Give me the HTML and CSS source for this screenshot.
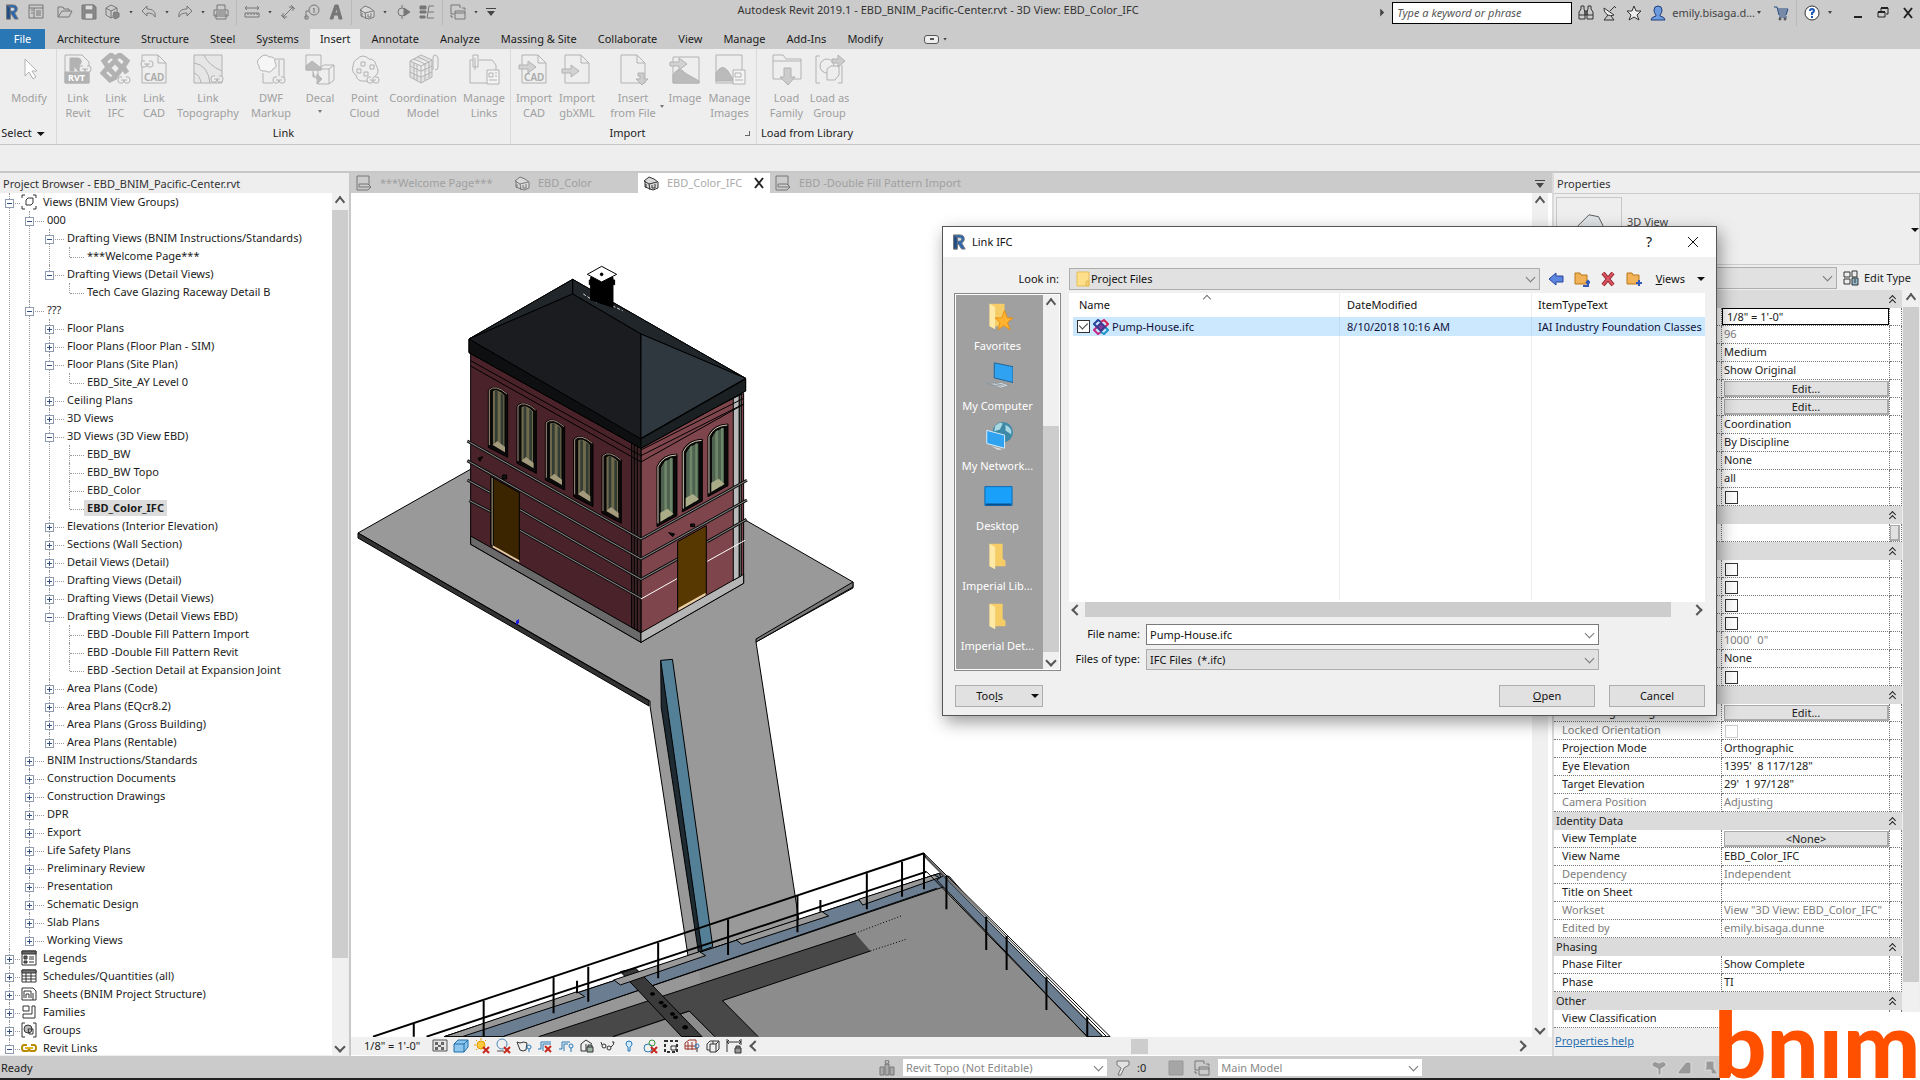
FILE: index.html
```
<!DOCTYPE html>
<html lang="en">
<head>
<meta charset="utf-8">
<title>Autodesk Revit 2019.1 - EBD_BNIM_Pacific-Center.rvt</title>
<link rel="stylesheet" href="styles.css">
</head>
<body>

<svg class="sprite" aria-hidden="true">
  <!-- 16px icons -->
  <symbol id="i-r" viewBox="0 0 16 18"><path d="M2 1h7q5 0 5 5 0 3-3 4l4 7h-4L7 11H6v6H2z" fill="#2b67b0"/><path d="M6 4h3q2 0 2 2t-2 2H6z" fill="#cfe0f2"/><path d="M2 1l4 3v13H2z" fill="#1d4a86"/></symbol>
  <symbol id="i-props" viewBox="0 0 16 16"><path d="M1 1h14v13H1zM1 4h14M6 4v10M3 6h2M3 9h2M8 7h5M8 9h5M8 11h5" /></symbol>
  <symbol id="i-open" viewBox="0 0 16 16"><path d="M1 13V3h5l1 2h5v2M1 13l4-6h10l-3 6z"/></symbol>
  <symbol id="i-save" viewBox="0 0 16 16"><path d="M1 1h12l2 2v12H1z" fill="#8a8a8a"/><path d="M4 1h8v5H4zM4 9h8v6H4z" fill="#ddd"/></symbol>
  <symbol id="i-sync" viewBox="0 0 16 16"><path d="M1 4l5-3 6 3v7l-6 3-5-3zM1 4l5 3 6-3M6 7v7"/><path d="M9 8l5 1v4l-4 2-2-3z" fill="#888"/></symbol>
  <symbol id="i-undo" viewBox="0 0 16 16"><path d="M1 7l5-5v3c6 0 9 3 8 8-1-3-4-4-8-4v3z"/></symbol>
  <symbol id="i-redo" viewBox="0 0 16 16"><path d="M15 7l-5-5v3c-6 0-9 3-8 8 1-3 4-4 8-4v3z"/></symbol>
  <symbol id="i-print" viewBox="0 0 16 16"><path d="M4 6V1h8v5M1 6h14v6H1z"/><path d="M3 10h10v5H3zM3 8h10"/></symbol>
  <symbol id="i-measure" viewBox="0 0 16 16"><path d="M1 4h14M3 2L1 4l2 2M13 2l2 2-2 2M1 9h14v4H1zM4 9v2M7 9v2M10 9v2M13 9v2"/></symbol>
  <symbol id="i-dim" viewBox="0 0 16 16"><path d="M3 13L13 3M9 3h4v4M3 9v4h4M11 1l4 4M1 11l4 4"/></symbol>
  <symbol id="i-tag" viewBox="0 0 16 16"><circle cx="10" cy="6" r="5"/><path d="M9 5l1-1v5M5 7H2v7M1 12h3v3H1z"/></symbol>
  <symbol id="i-a" viewBox="0 0 16 16"><path d="M2 15L7 1h3l4 14h-3l-1-4H6l-1 4zM7 9h3L8 4z" fill="#777"/></symbol>
  <symbol id="i-house" viewBox="0 0 16 16"><path d="M1 6l5-4 5 2 4 3v6l-5 2-8-3V6z" fill="#d9d9d9"/><path d="M1 6l5 3 1 6M6 9l8-2M3 9v4M9 10v3h3v-4"/></symbol>
  <symbol id="i-section" viewBox="0 0 16 16"><circle cx="7" cy="8" r="4"/><path d="M7 1v3M7 12v3M9 4l6 4-6 4z" fill="#777"/></symbol>
  <symbol id="i-thin" viewBox="0 0 16 16"><path d="M1 2h6v3H1zM1 7h6v2H1zM1 12h5v2H1z" fill="#777"/><path d="M10 2h5M9 8h6M8 14h7M10 2L8 14"/></symbol>
  <symbol id="i-switch" viewBox="0 0 16 16"><path d="M1 4V1h9v3M1 4v6h3M5 7h10v8H5zM5 9h10M12 4h3v2M3 13H1v-2"/></symbol>
  <symbol id="i-cust" viewBox="0 0 10 10"><path d="M0 1h10v1H0zM1 4h8L5 9z" fill="#444" stroke="none"/></symbol>
  <symbol id="i-binoc" viewBox="0 0 16 16"><path d="M3 1h3v3l1 3v7H1V7l2-3zM10 1h3v3l2 3v7H9V7l1-3zM7 6h2v4H7zM1 10h6M9 10h6"/></symbol>
  <symbol id="i-dish" viewBox="0 0 16 16"><path d="M2 3c0 6 5 9 10 7L2 3z" fill="#eee"/><path d="M8 6l4-4M6 10l-4 5h10l-3-4M12 1l2 2"/></symbol>
  <symbol id="i-star" viewBox="0 0 16 16"><path d="M8 1l2 5h5l-4 4 2 5-5-3-5 3 2-5-4-4h5z" fill="#eee"/></symbol>
  <symbol id="i-user" viewBox="0 0 16 16"><path d="M8 1q4 0 4 4 0 3-2 5v1q5 1 5 4H1q0-3 5-4v-1Q4 8 4 5q0-4 4-4z" fill="#6d9be0" stroke="#1f3e7a"/></symbol>
  <symbol id="i-cart" viewBox="0 0 16 16"><path d="M1 2h3l2 8h7l2-6H5M6 12h8M5 6h9M6 8h8" stroke="#234a86"/><circle cx="7" cy="14" r="1"/><circle cx="12" cy="14" r="1"/></symbol>
  <symbol id="i-help" viewBox="0 0 16 16"><circle cx="8" cy="8" r="7" fill="#fff" stroke="#333"/><path d="M6 6q0-2 2-2t2 2q0 1-2 2v2M8 11v2" stroke="#1a56b4" stroke-width="2"/></symbol>
  <symbol id="i-min" viewBox="0 0 12 12"><path d="M2 9h8v2H2z" fill="#222" stroke="none"/></symbol>
  <symbol id="i-restore" viewBox="0 0 12 12"><path d="M4 4V1h7v6H9M1 5h7v5H1z" stroke="#222"/><path d="M4 1h7M1 5h7" stroke="#222" stroke-width="2"/></symbol>
  <symbol id="i-close" viewBox="0 0 12 12"><path d="M2 1l8 10M10 1L2 11" stroke="#222" stroke-width="2"/></symbol>
  <symbol id="i-x" viewBox="0 0 12 12"><path d="M1 1l10 10M11 1L1 11" stroke="#111"/></symbol>
  <symbol id="i-sheet" viewBox="0 0 16 16"><path d="M1 12V1h12v9M1 12v3h11l3-3-3-3H3v3h12"/></symbol>
  <symbol id="i-views" viewBox="0 0 16 16"><path d="M4 1H1v3M12 1h3v3M4 15H1v-3M12 15h3v-3M5 6l2-2h5v5l-2 2H5z"/></symbol>
  <symbol id="i-legend" viewBox="0 0 16 16"><path d="M1 1h14v14H1z"/><path d="M1 1h14v3H1zM3 6h3v3H3zM3 11h3v2H3z" fill="#666"/><path d="M8 7h5M8 9h5M8 12h5"/></symbol>
  <symbol id="i-sched" viewBox="0 0 16 16"><path d="M1 2h14v12H1zM1 8h14M1 11h14M5 5v9M10 5v9"/><path d="M1 2h14v3H1z" fill="#777"/></symbol>
  <symbol id="i-sheets" viewBox="0 0 16 16"><path d="M1 2h11l3 3v9H1zM3 12V5h7v7M5 12V8h3v4M12 7v7"/></symbol>
  <symbol id="i-fam" viewBox="0 0 16 16"><path d="M2 2h6v5H2zM11 2h3v12H2v-4h9z"/></symbol>
  <symbol id="i-group" viewBox="0 0 16 16"><path d="M4 1H1v14h3M12 1h3v14h-3"/><circle cx="7" cy="7" r="4" fill="#bbb"/><path d="M7 7h5v5H8z"/></symbol>
  <symbol id="i-link" viewBox="0 0 16 16"><path d="M6 5H3q-2 0-2 3t2 3h3q2 0 2-3M10 5h3q2 0 2 3t-2 3h-3q-2 0-2-3M4 8h8" stroke="#b98a00" stroke-width="2"/><path d="M4 8h8" stroke="#ffd84a"/></symbol>
  <symbol id="i-type" viewBox="0 0 16 16"><path d="M1 2h6v5H1zM9 1h5v6H9zM1 9h6v5H1z"/><path d="M9 8h6v7H9z" fill="#8fb8cc"/><path d="M11 10h2M11 12h2"/></symbol>

  <!-- view control bar -->
  <symbol id="v-detail" viewBox="0 0 16 16"><path d="M1 2h14v11H1z" fill="#e4e4e4" stroke="#555"/><path d="M3 4h3v3H3zM9 4h3v3H9zM6 7h3v2H6zM3 9h3v3H3zM9 9h3v3H9z" fill="#666" stroke="none"/></symbol>
  <symbol id="v-cube" viewBox="0 0 16 16"><path d="M1 6l4-4h10v7l-4 5H1zM1 6h10v8M11 6l4-4" fill="#8cc6ee" stroke="#1f6fa8"/></symbol>
  <symbol id="v-sun" viewBox="0 0 16 16"><circle cx="7" cy="7" r="4" fill="#ffc93c" stroke="#e09a00"/><path d="M7 0v2M0 7h2M2 2l1 1M12 2l-1 1M2 12l1-1" stroke="#e09a00"/><path d="M9 9l6 6M15 9l-6 6" stroke="#c5281c" stroke-width="2"/></symbol>
  <symbol id="v-shadow" viewBox="0 0 16 16"><circle cx="7" cy="6" r="5" stroke="#4e89b8"/><path d="M2 13h7" stroke="#555"/><path d="M9 9l6 6M15 9l-6 6" stroke="#c5281c" stroke-width="2"/></symbol>
  <symbol id="v-pot" viewBox="0 0 16 16"><path d="M1 4l3 1q4-2 7 0l-1 7q-3 2-6 0z"/><circle cx="13" cy="9" r="2" stroke="#2778b5"/><path d="M13 11v3" stroke="#2778b5"/></symbol>
  <symbol id="v-crop" viewBox="0 0 16 16"><path d="M1 11h3V4h10M6 13V6h8" stroke="#2778b5"/><path d="M8 8l6 6M14 8l-6 6" stroke="#c5281c" stroke-width="2"/></symbol>
  <symbol id="v-crop2" viewBox="0 0 16 16"><path d="M1 11h3V4h8M6 13V6h4" stroke="#2778b5"/><circle cx="13" cy="8" r="2" stroke="#2778b5"/><path d="M13 10v4" stroke="#2778b5"/></symbol>
  <symbol id="v-lock" viewBox="0 0 16 16"><path d="M2 6l5-4 6 4M2 6v7h5M7 6v7"/><path d="M8 9h6v5H8zM9 9V7h4v2" fill="#9fb6a4"/></symbol>
  <symbol id="v-glass" viewBox="0 0 16 16"><circle cx="4" cy="8" r="2"/><circle cx="9" cy="10" r="2"/><path d="M2 7L1 4M11 9q3-2 3-5h-2"/></symbol>
  <symbol id="v-bulb" viewBox="0 0 16 16"><path d="M8 3q3 0 3 3 0 2-2 3v4H7V9Q5 8 5 6q0-3 3-3z" fill="#cfeaff" stroke="#2778b5"/></symbol>
  <symbol id="v-analytic" viewBox="0 0 16 16"><circle cx="6" cy="10" r="4" stroke="#2778b5"/><circle cx="10" cy="5" r="3" stroke="#3a9440"/><path d="M9 9l6 6M15 9l-6 6" stroke="#c5281c" stroke-width="2"/></symbol>
  <symbol id="v-region" viewBox="0 0 16 16"><path d="M2 3h12v11H2z" stroke-width="2" stroke-dasharray="3 2"/><path d="M8 8h5v4H8z"/></symbol>
  <symbol id="v-grid" viewBox="0 0 16 16"><path d="M1 5l4-3h7v9H1zM1 8h10M4 4v8M8 4v8" stroke="#9b3328"/><circle cx="13" cy="8" r="2" stroke="#2778b5"/><path d="M13 10v4"/></symbol>
  <symbol id="v-boxes" viewBox="0 0 16 16"><path d="M2 6l3-3h9v8l-3 3H5V6h6v8M11 6l3-3M2 6v6h3M8 3v3"/></symbol>
  <symbol id="v-constr" viewBox="0 0 16 16"><path d="M1 1v13M15 1v6M1 4h14M3 2L1 4l2 2M13 2l2 2-2 2"/><path d="M9 10h6v5H9zM10 10V8h4v2" fill="#999"/></symbol>
  <symbol id="s-people" viewBox="0 0 16 16"><path d="M1 7h4v8H1zM6 4h4v11H6zM11 7h4v8h-4z" fill="#aaa"/><circle cx="8" cy="2" r="2" fill="#bbb"/></symbol>
  <symbol id="s-filter" viewBox="0 0 16 16"><path d="M2 1h12v4l-5 3-3 7H3l3-7-4-3z" fill="#e2e2e2"/></symbol>
  <symbol id="s-blk" viewBox="0 0 16 16"><path d="M1 1h14v14H1z" fill="#a6a6a6" stroke="#999"/></symbol>
  <symbol id="s-fun" viewBox="0 0 16 16"><path d="M1 3q3-3 7 0 4-3 7 0v3l-5 3v6H7V9L1 6z" fill="#999" stroke="#ddd"/></symbol>
  <symbol id="s-wedge" viewBox="0 0 16 16"><path d="M1 12L9 2h5v12H1z" fill="#999" stroke="#ddd"/></symbol>
  <symbol id="s-pin" viewBox="0 0 16 16"><path d="M3 1h8v7l4 6H8v-4H1l2-2z" fill="#999" stroke="#ddd"/></symbol>

  <!-- dialog icons -->
  <symbol id="d-folder" viewBox="0 0 16 16"><path d="M2 1h12v14H2z" fill="#ffe08a" stroke="#e3bd5b"/><path d="M11 10h3v5h-3z" fill="#f3cf6d" stroke="#e3bd5b"/></symbol>
  <symbol id="d-ifc" viewBox="0 0 16 16"><g stroke-width="2"><path d="M8 3L5 1 1 5l3 3" stroke="#24439a"/><path d="M8 3l3-2 4 4-3 3" stroke="#d6245a"/><path d="M4 8l-3 3 4 4 3-2" stroke="#c22a86"/><path d="M12 8l3 3-4 4-3-2" stroke="#1d93c9"/><path d="M8 4l4 4-4 4-4-4z" fill="#7c3f9e" stroke="#3f3a8e"/></g></symbol>
  <symbol id="d-back" viewBox="0 0 16 16"><path d="M1 8l7-6v3h7v6H8v3z" fill="#5d86e0" stroke="#27449a"/></symbol>
  <symbol id="d-up" viewBox="0 0 16 16"><path d="M1 2h5l1 2h6v9H1z" fill="#f2b257" stroke="#b8761a"/><path d="M9 15h5v-4M12 12l2-2 2 2" stroke="#3159b8" stroke-width="2"/></symbol>
  <symbol id="d-del" viewBox="0 0 16 16"><path d="M3 2l10 12M13 2L3 14" stroke="#8e1f29" stroke-width="4"/><path d="M3 2l10 12M13 2L3 14" stroke="#dc5560" stroke-width="2"/></symbol>
  <symbol id="d-new" viewBox="0 0 16 16"><path d="M1 2h5l1 2h6v9H1z" fill="#f2b257" stroke="#b8761a"/><path d="M13 9v6M10 12h6" stroke="#3159b8" stroke-width="2"/></symbol>
  <symbol id="p-fold" viewBox="0 0 32 32"><path d="M7 3h14v16l3 2v6H7z" fill="#f5cc66"/><path d="M7 3l6 3v24l-6-3z" fill="#ffe9a6"/></symbol>
  <symbol id="p-fav" viewBox="0 0 32 32"><path d="M7 3h16v24H7z" fill="#f5cc66"/><path d="M7 3l6 3v24l-6-3z" fill="#ffe9a6"/><path d="M23 10l3 8h6l-6 5 3 8-7-5-6 5 2-8-5-5h7z" fill="#ffb32e" stroke="#e58f12"/></symbol>
  <symbol id="p-comp" viewBox="0 0 32 32"><path d="M12 2l20 4v17l-20-5z" fill="#2fa3f2" stroke="#1a5f93"/><path d="M4 24l16-1 8 3-9 3z" fill="#d9dfe4" stroke="#8a949c"/><path d="M8 25l12 2M13 24l10 2" stroke="#8a949c"/></symbol>
  <symbol id="p-net" viewBox="0 0 32 32"><circle cx="21" cy="12" r="11" fill="#3f89a8"/><path d="M13 5q6-5 8-2l-3 6-6 2zM24 4q8 4 6 10l-6-4z" fill="#a8d8e2"/><path d="M4 10l19 5v14L4 24z" fill="#2fa3f2" stroke="#dff0fa"/><path d="M9 27l12 3-5 1z" fill="#d9dfe4"/></symbol>
  <symbol id="p-desk" viewBox="0 0 32 32"><path d="M2 6h29v20H2z" fill="#18a0fb" stroke="#0b66b0"/><path d="M3 24h27v2H3z" fill="#0a4f8c"/></symbol>

  <!-- 32px ribbon icons -->
  <symbol id="b-modify" viewBox="0 0 32 32"><path d="M12 6v17l4-4 4 7 3-2-4-6h5z" fill="#fff"/></symbol>
  <symbol id="b-chain" viewBox="0 0 14 8"><path d="M5 1H3Q1 1 1 4t2 3h2q2 0 2-3M9 1h2q2 0 2 3t-2 3H9Q7 7 7 4M4 4h6" fill="#eee"/></symbol>
  <symbol id="b-revit" viewBox="0 0 32 32"><path d="M3 2h17l7 7v21H3z"/><path d="M3 19h24v11H3zM8 5h7q5 0 4 5l-2 3 3 5h-4l-4-5v5H8z" fill="#b2b2b2"/><text x="6" y="28" class="ico-w">RVT</text><use href="#b-chain" x="16" y="12" width="14" height="8"/></symbol>
  <symbol id="b-ifc" viewBox="0 0 32 32"><path d="M15 5l-4-3-7 6 4 6-5 6 7 7 6-3M15 5l5-3 7 6-4 6 4 6M15 8l7 7-6 8-8-8z" stroke-width="5"/><use href="#b-chain" x="17" y="23" width="14" height="8"/></symbol>
  <symbol id="b-cad" viewBox="0 0 32 32"><path d="M4 2h16l8 8v20H4zM20 2v8h8"/><text x="6" y="28" class="ico-t">CAD</text></symbol>
  <symbol id="b-lcad" viewBox="0 0 32 32"><use href="#b-cad"/><use href="#b-chain" x="2" y="7" width="14" height="8"/></symbol>
  <symbol id="b-icad" viewBox="0 0 32 32"><use href="#b-cad"/><use href="#b-arr"/></symbol>
  <symbol id="b-arr" viewBox="0 0 32 32"><path d="M1 12h9V8l8 6-8 6v-4H1z" fill="#d2d2d2"/></symbol>
  <symbol id="b-gb" viewBox="0 0 32 32"><path d="M4 2h16l8 8v20H4zM20 2v8h8"/><use href="#b-arr" y="4"/></symbol>
  <symbol id="b-topo" viewBox="0 0 32 32"><path d="M2 2h28v28H2z" fill="#e6e6e6"/><path d="M2 10q14 2 16 20M2 20q6 2 7 10M12 2q4 10 18 16"/><use href="#b-chain" x="18" y="22" width="14" height="8"/></symbol>
  <symbol id="b-dwf" viewBox="0 0 32 32"><path d="M20 6h9v22h-8M8 20v10h10M24 7v16"/><path d="M6 4q4-4 8 0 6-1 6 5 3 5-2 7-3 5-7 2-7 1-7-5-4-5 2-9z" fill="#f6f6f6"/><use href="#b-chain" x="17" y="23" width="14" height="8"/></symbol>
  <symbol id="b-decal" viewBox="0 0 32 32"><path d="M2 2h15v15H2zM14 16l6-4h10v15l-5 4H14zM25 16v15M14 16h11l5-4"/><path d="M2 13l6-5 9 7v2H2zM9 18v6h4v-3l5 5-5 5v-3" fill="#bbb"/></symbol>
  <symbol id="b-cloud" viewBox="0 0 32 32"><path d="M8 6q6-6 12 0 6 0 7 6 5 8-2 12-4 6-9 4-8 1-9-6-5-3-3-9 0-5 4-7z"/><path d="M12 9h4v4h-4zM21 12h4v4h-4zM8 16h4v4H8zM15 19h4v4h-4z"/><use href="#b-chain" x="17" y="23" width="14" height="8"/></symbol>
  <symbol id="b-coord" viewBox="0 0 32 32"><path d="M3 8l11-6 11 5v17l-11 6-11-6zM3 8l11 5 11-6M14 13v17M3 13l11 5 11-5M3 19l11 5 11-5M7 10v16M10 12v16M18 11v16M22 9v16M7 6l11 5M11 4l11 5" fill="#e2e2e2"/><path d="M26 17V5q0-3 2-3t3 3v9q0 3-3 3"/></symbol>
  <symbol id="b-mlinks" viewBox="0 0 32 32"><path d="M5 7H2v23h26V12l-4-5H11"/><path d="M5 2h5v12H5zM7 5v12" /><path d="M19 17h12v14H19z" fill="#f4f4f4"/><path d="M21 20h4v4h-4zM27 20h2M27 23h2M21 27h8"/></symbol>
  <symbol id="b-insert" viewBox="0 0 32 32"><path d="M4 2h16l8 8v20H4zM20 2v8h8"/><path d="M21 20h6v6h4l-6 6-6-6h4v-3h-2z" fill="#ccc"/></symbol>
  <symbol id="b-image" viewBox="0 0 32 32"><path d="M4 4h26v26H4z"/><path d="M4 30V22q6-10 12-2l14 8v2z" fill="#bbb"/><use href="#b-arr" y="-3"/></symbol>
  <symbol id="b-mimg" viewBox="0 0 32 32"><path d="M2 2h26v28H2z"/><path d="M2 28v-8q6-10 12-2l6 10z" fill="#bbb"/><path d="M19 17h12v14H19z" fill="#f4f4f4"/><path d="M21 20h6v4h-6zM21 27h8"/></symbol>
  <symbol id="b-family" viewBox="0 0 32 32"><path d="M2 26V2h10l3 4h15v20zM2 8h28"/><path d="M13 15h7v9h4l-7 8-8-8h4z" fill="#ccc"/></symbol>
  <symbol id="b-group" viewBox="0 0 32 32"><path d="M6 3H2v27h4M24 30h4V12"/><circle cx="13" cy="13" r="7"/><path d="M13 16l4-3h8v9l-4 5h-8z" fill="#eee"/><path d="M18 6h6V2l7 6-7 6v-4h-6z" fill="#ccc"/></symbol>
</svg>

<header class="titlebar">
  <div class="qat">
    <svg class="ic"><use href="#i-r"/></svg>
    <svg class="ic home"><use href="#i-props"/></svg>
    <svg class="ic"><use href="#i-open"/></svg>
    <svg class="ic"><use href="#i-save"/></svg>
    <svg class="ic"><use href="#i-sync"/></svg><i class="arr"></i>
    <svg class="ic"><use href="#i-undo"/></svg><i class="arr"></i>
    <svg class="ic"><use href="#i-redo"/></svg><i class="arr"></i>
    <svg class="ic"><use href="#i-print"/></svg><i class="sep"></i>
    <svg class="ic"><use href="#i-measure"/></svg><i class="arr"></i>
    <svg class="ic"><use href="#i-dim"/></svg>
    <svg class="ic"><use href="#i-tag"/></svg>
    <svg class="ic"><use href="#i-a"/></svg><i class="sep"></i>
    <svg class="ic"><use href="#i-house"/></svg><i class="arr"></i>
    <svg class="ic"><use href="#i-section"/></svg>
    <svg class="ic"><use href="#i-thin"/></svg><i class="sep"></i>
    <svg class="ic"><use href="#i-switch"/></svg><i class="arr"></i>
    <svg class="ic small"><use href="#i-cust"/></svg>
  </div>
  <h1 class="apptitle">Autodesk Revit 2019.1 - EBD_BNIM_Pacific-Center.rvt - 3D View: EBD_Color_IFC</h1>
  <div class="infocenter">
    <i class="arr right"></i>
    <input class="search" type="text" placeholder="Type a keyword or phrase" aria-label="Search">
    <svg class="ic dark"><use href="#i-binoc"/></svg>
    <svg class="ic dark"><use href="#i-dish"/></svg>
    <svg class="ic dark"><use href="#i-star"/></svg>
    <svg class="ic dark"><use href="#i-user"/></svg>
    <span class="username">emily.bisaga.d...</span><i class="arr"></i>
    <svg class="ic dark cart"><use href="#i-cart"/></svg><i class="sep"></i>
    <svg class="ic dark"><use href="#i-help"/></svg><i class="arr"></i>
  </div>
  <div class="winbtns">
    <button type="button" aria-label="Minimize"><svg><use href="#i-min"/></svg></button>
    <button type="button" aria-label="Restore"><svg><use href="#i-restore"/></svg></button>
    <button type="button" aria-label="Close"><svg><use href="#i-close"/></svg></button>
  </div>
</header>

<nav class="tabs">
  <button type="button" class="file">File</button>
  <button type="button">Architecture</button>
  <button type="button">Structure</button>
  <button type="button">Steel</button>
  <button type="button">Systems</button>
  <button type="button" class="on">Insert</button>
  <button type="button">Annotate</button>
  <button type="button">Analyze</button>
  <button type="button">Massing &amp; Site</button>
  <button type="button">Collaborate</button>
  <button type="button">View</button>
  <button type="button">Manage</button>
  <button type="button">Add-Ins</button>
  <button type="button">Modify</button>
  <button type="button" class="collapse" aria-label="Minimize ribbon"><span class="pill"></span><i class="arr"></i></button>
</nav>

<section class="ribbon">
  <div class="rpanel select">
    <div class="rbtns">
      <button type="button" disabled><svg><use href="#b-modify"/></svg>Modify</button>
    </div>
    <div class="cap">Select <i class="arr big"></i></div>
  </div>
  <div class="rpanel link">
    <div class="rbtns">
      <button type="button" disabled><svg><use href="#b-revit"/></svg>Link<br>Revit</button>
      <button type="button" disabled><svg><use href="#b-ifc"/></svg>Link<br>IFC</button>
      <button type="button" disabled><svg><use href="#b-lcad"/></svg>Link<br>CAD</button>
      <button type="button" disabled><svg><use href="#b-topo"/></svg>Link<br>Topography</button>
      <button type="button" disabled><svg><use href="#b-dwf"/></svg>DWF<br>Markup</button>
      <button type="button" disabled><svg><use href="#b-decal"/></svg>Decal<i class="arr"></i></button>
      <button type="button" disabled><svg><use href="#b-cloud"/></svg>Point<br>Cloud</button>
      <button type="button" disabled><svg><use href="#b-coord"/></svg>Coordination<br>Model</button>
      <button type="button" disabled><svg><use href="#b-mlinks"/></svg>Manage<br>Links</button>
    </div>
    <div class="cap">Link</div>
  </div>
  <div class="rpanel import">
    <div class="rbtns">
      <button type="button" disabled><svg><use href="#b-icad"/></svg>Import<br>CAD</button>
      <button type="button" disabled><svg><use href="#b-gb"/></svg>Import<br>gbXML</button>
      <button type="button" disabled class="drop"><svg><use href="#b-insert"/></svg>Insert<br>from File<i class="arr"></i></button>
      <button type="button" disabled><svg><use href="#b-image"/></svg>Image</button>
      <button type="button" disabled><svg><use href="#b-mimg"/></svg>Manage<br>Images</button>
    </div>
    <div class="cap">Import<span class="launch"></span></div>
  </div>
  <div class="rpanel load">
    <div class="rbtns">
      <button type="button" disabled><svg><use href="#b-family"/></svg>Load<br>Family</button>
      <button type="button" disabled><svg><use href="#b-group"/></svg>Load as<br>Group</button>
    </div>
    <div class="cap">Load from Library</div>
  </div>
</section>
<div class="optionsbar"></div>

<main class="work">

<aside class="browser">
  <h2>Project Browser - EBD_BNIM_Pacific-Center.rvt</h2>
  <div class="scrollbox">
  <ul class="tree">
    <li><div class="row root"><button class="tg minus" aria-label="Collapse"></button><svg class="ic dark"><use href="#i-views"/></svg><span>Views (BNIM View Groups)</span></div>
      <ul>
        <li><div class="row"><button class="tg minus" aria-label="Collapse"></button><span>000</span></div>
          <ul>
            <li><div class="row"><button class="tg minus" aria-label="Collapse"></button><span>Drafting Views (BNIM Instructions/Standards)</span></div>
              <ul><li><div class="row"><span>***Welcome Page***</span></div></li></ul></li>
            <li><div class="row"><button class="tg minus" aria-label="Collapse"></button><span>Drafting Views (Detail Views)</span></div>
              <ul><li><div class="row"><span>Tech Cave Glazing Raceway Detail B</span></div></li></ul></li>
          </ul>
        </li>
        <li><div class="row"><button class="tg minus" aria-label="Collapse"></button><span>???</span></div>
          <ul>
            <li><div class="row"><button class="tg" aria-label="Expand"></button><span>Floor Plans</span></div></li>
            <li><div class="row"><button class="tg" aria-label="Expand"></button><span>Floor Plans (Floor Plan - SIM)</span></div></li>
            <li><div class="row"><button class="tg minus" aria-label="Collapse"></button><span>Floor Plans (Site Plan)</span></div>
              <ul><li><div class="row"><span>EBD_Site_AY Level 0</span></div></li></ul></li>
            <li><div class="row"><button class="tg" aria-label="Expand"></button><span>Ceiling Plans</span></div></li>
            <li><div class="row"><button class="tg" aria-label="Expand"></button><span>3D Views</span></div></li>
            <li><div class="row"><button class="tg minus" aria-label="Collapse"></button><span>3D Views (3D View EBD)</span></div>
              <ul>
                <li><div class="row"><span>EBD_BW</span></div></li>
                <li><div class="row"><span>EBD_BW Topo</span></div></li>
                <li><div class="row"><span>EBD_Color</span></div></li>
                <li><div class="row"><span class="current">EBD_Color_IFC</span></div></li>
              </ul></li>
            <li><div class="row"><button class="tg" aria-label="Expand"></button><span>Elevations (Interior Elevation)</span></div></li>
            <li><div class="row"><button class="tg" aria-label="Expand"></button><span>Sections (Wall Section)</span></div></li>
            <li><div class="row"><button class="tg" aria-label="Expand"></button><span>Detail Views (Detail)</span></div></li>
            <li><div class="row"><button class="tg" aria-label="Expand"></button><span>Drafting Views (Detail)</span></div></li>
            <li><div class="row"><button class="tg" aria-label="Expand"></button><span>Drafting Views (Detail Views)</span></div></li>
            <li><div class="row"><button class="tg minus" aria-label="Collapse"></button><span>Drafting Views (Detail Views EBD)</span></div>
              <ul>
                <li><div class="row"><span>EBD -Double Fill Pattern Import</span></div></li>
                <li><div class="row"><span>EBD -Double Fill Pattern Revit</span></div></li>
                <li><div class="row"><span>EBD -Section Detail at Expansion Joint</span></div></li>
              </ul></li>
            <li><div class="row"><button class="tg" aria-label="Expand"></button><span>Area Plans (Code)</span></div></li>
            <li><div class="row"><button class="tg" aria-label="Expand"></button><span>Area Plans (EQcr8.2)</span></div></li>
            <li><div class="row"><button class="tg" aria-label="Expand"></button><span>Area Plans (Gross Building)</span></div></li>
            <li><div class="row"><button class="tg" aria-label="Expand"></button><span>Area Plans (Rentable)</span></div></li>
          </ul>
        </li>
        <li><div class="row"><button class="tg" aria-label="Expand"></button><span>BNIM Instructions/Standards</span></div></li>
        <li><div class="row"><button class="tg" aria-label="Expand"></button><span>Construction Documents</span></div></li>
        <li><div class="row"><button class="tg" aria-label="Expand"></button><span>Construction Drawings</span></div></li>
        <li><div class="row"><button class="tg" aria-label="Expand"></button><span>DPR</span></div></li>
        <li><div class="row"><button class="tg" aria-label="Expand"></button><span>Export</span></div></li>
        <li><div class="row"><button class="tg" aria-label="Expand"></button><span>Life Safety Plans</span></div></li>
        <li><div class="row"><button class="tg" aria-label="Expand"></button><span>Preliminary Review</span></div></li>
        <li><div class="row"><button class="tg" aria-label="Expand"></button><span>Presentation</span></div></li>
        <li><div class="row"><button class="tg" aria-label="Expand"></button><span>Schematic Design</span></div></li>
        <li><div class="row"><button class="tg" aria-label="Expand"></button><span>Slab Plans</span></div></li>
        <li><div class="row"><button class="tg" aria-label="Expand"></button><span>Working Views</span></div></li>
      </ul>
    </li>
    <li><div class="row root"><button class="tg" aria-label="Expand"></button><svg class="ic dark"><use href="#i-legend"/></svg><span>Legends</span></div></li>
    <li><div class="row root"><button class="tg" aria-label="Expand"></button><svg class="ic dark"><use href="#i-sched"/></svg><span>Schedules/Quantities (all)</span></div></li>
    <li><div class="row root"><button class="tg" aria-label="Expand"></button><svg class="ic dark"><use href="#i-sheets"/></svg><span>Sheets (BNIM Project Structure)</span></div></li>
    <li><div class="row root"><button class="tg" aria-label="Expand"></button><svg class="ic dark"><use href="#i-fam"/></svg><span>Families</span></div></li>
    <li><div class="row root"><button class="tg" aria-label="Expand"></button><svg class="ic dark"><use href="#i-group"/></svg><span>Groups</span></div></li>
    <li><div class="row root"><button class="tg minus" aria-label="Collapse"></button><svg class="ic"><use href="#i-link"/></svg><span>Revit Links</span></div></li>
  </ul>
  <div class="vscroll"><i class="chev up"></i><div class="thumb browser-thumb"></div><i class="chev down"></i></div>
  </div>
</aside>

<section class="viewarea">
  <div class="doctabs">
    <div class="dtab t1"><svg class="ic"><use href="#i-sheet"/></svg>***Welcome Page***</div>
    <div class="dtab t2"><svg class="ic"><use href="#i-house"/></svg>EBD_Color</div>
    <div class="dtab active"><svg class="ic dark"><use href="#i-house"/></svg>EBD_Color_IFC<button type="button" aria-label="Close tab"><svg><use href="#i-close"/></svg></button></div>
    <div class="dtab"><svg class="ic"><use href="#i-sheet"/></svg>EBD -Double Fill Pattern Import</div>
    <svg class="ic small tablist"><use href="#i-cust"/></svg>
  </div>
  <div class="canvas">
    <div class="model">
    <svg width="1181" height="844" viewBox="351 193 1181 844">
      <!-- site slab and walkway -->
      <g stroke="#000">
        <path d="M358 533l113-64 276 52 106 61v6l-97 54 43 279-111 35-38-250v-5z" fill="#999"/>
        <path d="M358 533l291 168v5L358 538z" fill="#333"/>
        <path d="M853 582v5l-97 55v-3z" fill="#777"/>
      </g>
      <g fill="#1a1ae0"><path d="M516 621l3-2v4l-3 2z"/></g>

      <g transform="translate(350 240) scale(.3333)" class="hair">
        <!-- walls -->
        <path d="M362 335L873 615v592L362 913z" fill="#4a2229"/>
        <path d="M873 615l308-155v570L873 1207z" fill="#7f454c"/>
        <path d="M362 888l511 290v29L362 913z" fill="#6a6a6a"/>
        <path d="M873 1178l308-175v27L873 1207z" fill="#b5b5b5"/>
        <path d="M845 600l28 15v563l-28-16z" fill="#3a2226"/>
        <path d="M853 605v562M862 610v562"/>
        <path d="M1150 475l18-9v545l-18 10z" fill="#b9b9b9"/>
        <path d="M1168 466l6-3v545l-6 3z" fill="#777"/>
        <path d="M362 362l511 285M362 378l511 288M873 630l308-155M873 647l308-155M873 666l308-173" fill="none"/>
        <!-- roof -->
        <path d="M357 297L668 118l519 297v38L873 625 357 338z" fill="#101314"/>
        <path d="M357 297L668 118v44zM668 118l519 297-314-133-205-120z" fill="#20262a"/>
        <path d="M357 297L668 162 873 282v318z" fill="#1a1c1f"/>
        <path d="M873 282l314 133-314 180z" fill="#30383f"/>
        <path d="M357 297l516 300v28L357 338z" fill="#0d0f10"/>
        <path d="M873 597l314-180v36L873 625z" fill="#1b2023"/>
        <path d="M700 162l40 26M788 198l30 14" stroke="#ddd" stroke-dasharray="3 2" fill="none"/>
        <path d="M722 112h67v90l-67-22z" fill="#000"/>
        <path d="M718 120h76v14h-76z" fill="#000"/>
        <path d="M712 103l43-24 45 24-45 23z" fill="#fff"/><circle cx="755" cy="103" r="4" fill="#000"/>
        <!-- left elevation windows, same unit stepped down the wall -->
        <g id="win">
          <path d="M415 622V450q18-22 58 12v190z" fill="#0c0a0a"/>
          <path d="M427 615V452q16-10 38 14v168z" fill="#6f6a4c"/>
          <path d="M435 610V452l8 2v164zM452 620V460l8 5v165z" fill="#323c34" stroke="none"/>
          <path d="M428 615l14-12 23 18v16z" fill="#a39b7c" stroke="none"/>
          <path d="M418 615V450q18-18 53 12" fill="none" stroke="#a3907f"/>
        </g>
        <use href="#win" x="86" y="48"/><use href="#win" x="171" y="98"/><use href="#win" x="256" y="148"/><use href="#win" x="341" y="198"/>
        <!-- right elevation windows -->
        <g id="winr">
          <path d="M921 860V680q14-36 60-38v185z" fill="#0c0a0a"/>
          <path d="M931 846V684q10-26 40-32v170z" fill="#4f6350"/>
          <path d="M943 838V665l8-5v172zM960 830V655l6-2v172z" fill="#6f8769" stroke="none"/>
          <path d="M931 846v-28l22-12 18 16z" fill="#a9ac86" stroke="none"/>
          <path d="M924 850V680q14-33 55-35" fill="none" stroke="#d8cdb8"/>
        </g>
        <use href="#winr" x="76" y="-44"/><use href="#winr" x="153" y="-90"/>
        <!-- pipe bands -->
        <g class="pipe">
          <path d="M352 603l521 294 318-176M352 662l521 295 318-177M352 720l70 38M508 808l365 210 112-62M1072 905l118-67M358 782l70 36M508 870l365 205"/>
        </g>
        <g class="pipe in">
          <path d="M352 603l521 294 318-176M352 662l521 295 318-177M352 720l70 38M508 808l365 210 112-62M1072 905l118-67M358 782l70 36M508 870l365 205"/>
        </g>
        <path d="M873 1077l112-63M1072 964l113-63" class="white"/>
        <!-- doors -->
        <path d="M423 710l85 48v206l-85-48z" fill="#3a2500"/>
        <path d="M423 710l7 4v204l-7-2z" fill="#8d8165"/>
        <path d="M428 916l80 45v6l-80-45z" fill="#e8cfa4" stroke="none"/>
        <path d="M983 905l86-48v205l-86 48z" fill="#563800"/>
        <path d="M985 1104l82-46v8l-82 46z" fill="#e8cfa4" stroke="none"/>
        <path d="M384 655l14-5-8 14zM458 705h12v12h-12zM956 878l18 4-6 8zM1022 852h12v8h-12z" fill="#111"/>
      </g>

      <g transform="translate(350 640) scale(.5102 .3333)" class="hair">
        <!-- blue wall on the walkway -->
        <path d="M609 62l4 1 78 870-8 4-73-735z" fill="#1f2b33"/>
        <path d="M609 61l23-3 79 862-21 12z" fill="#548097"/>
        <!-- terrace deck -->
        <path d="M185 1190L1155 700l20 10 280 490H185z" fill="#8c8c8c"/>
        <path d="M185 1190l970-490 10 40-865 450z" fill="#6b7d90"/>
        <path d="M300 1190l384-198 4 45-308 153z" fill="#979797" stroke="none"/>
        <path d="M370 1190l620-310 30 53-290 149 70 108h-85l-50-75-145 75z" fill="#484848" stroke="none"/>
        <path d="M370 1190l620-310M515 1190l150-77 50 77M730 1082l290-149M730 1082l70 108M300 1190l850-445" fill="none"/>
        <path d="M990 880l90-52M1020 933l70-35" stroke-dasharray="1 2" fill="none"/>
        <path d="M530 995l30-10 130 205h-40z" fill="#3a3a3a"/>
        <g fill="#000"><circle cx="593" cy="1062" r="4"/><circle cx="610" cy="1088" r="4"/><circle cx="617" cy="1098" r="4"/><circle cx="632" cy="1122" r="4"/><circle cx="638" cy="1132" r="4"/><circle cx="657" cy="1162" r="5"/></g>
        <g fill="#999"><path d="M185 1190l260-135 15 15-240 120zM517 1020l168-85 12 12-167 88zM757 900l168-85 13 13-170 85zM997 778l148-73 10 8-150 82z"/></g>
        <path d="M1150 720l15-15 310 485h-30z" fill="#6b7d90"/>
        <path d="M1125 640l365 550h-14L1129 655z" fill="#fff"/>
        <path d="M1127 647l356 543M1130 695l315 495" fill="none"/>
        <!-- railings -->
        <path d="M45 1190L1125 640" class="rail"/>
        <path d="M150 1190l980-495" class="rail mid"/>
        <path class="rail mid" d="M125 1150v40M262 1082v108M399 1012v108M467 980v105M604 908v107M741 838v107M877 768v109M1013 700v108M1082 665v105M1125 640v108M1169 708v100M1247 830v100M1287 888v102M1365 1012v98M1445 1130v60M445 1022v38M922 780v35"/>
      </g>
    </svg>
    </div>
    <div class="vscroll"><i class="chev up"></i><div class="gap"></div><i class="chev down"></i></div>
  </div>
  <div class="viewbar">
    <span class="scale">1/8" = 1'-0"</span>
    <svg class="ic dark"><use href="#v-detail"/></svg>
    <svg class="ic dark"><use href="#v-cube"/></svg>
    <svg class="ic dark"><use href="#v-sun"/></svg>
    <svg class="ic dark"><use href="#v-shadow"/></svg>
    <svg class="ic dark"><use href="#v-pot"/></svg>
    <svg class="ic dark"><use href="#v-crop"/></svg>
    <svg class="ic dark"><use href="#v-crop2"/></svg>
    <svg class="ic dark"><use href="#v-lock"/></svg>
    <svg class="ic dark"><use href="#v-glass"/></svg>
    <svg class="ic dark"><use href="#v-bulb"/></svg>
    <svg class="ic dark"><use href="#v-analytic"/></svg>
    <svg class="ic dark"><use href="#v-region"/></svg>
    <svg class="ic dark"><use href="#v-grid"/></svg>
    <svg class="ic dark"><use href="#v-boxes"/></svg>
    <svg class="ic dark"><use href="#v-constr"/></svg>
    <i class="chev left"></i>
    <div class="hthumb"></div>
    <i class="chev rightward"></i>
  </div>
</section>

<aside class="props">
  <h2>Properties</h2>
  <div class="typesel">
    <div class="preview"><svg viewBox="0 0 40 40"><path d="M4 20L20 4l10 2 6 12-8 12-20 2z" fill="#dfe3e6" stroke="#555"/><path d="M4 20l8-4 6 12" fill="#999" stroke="#555"/></svg></div>
    <span>3D View</span>
    <i class="arr big"></i>
  </div>
  <div class="instance">
    <span class="combo grey"><select aria-label="Instance"><option></option></select></span>
    <button type="button"><svg class="ic dark"><use href="#i-type"/></svg>Edit Type</button>
  </div>
  <div class="scrollbox">
  <table class="ptable">
    <colgroup><col class="c1"><col class="c2"><col class="c3"></colgroup>
    <tr class="grp"><th colspan="3"><i class="dbl"></i></th></tr>
    <tr><td></td><td><input class="cellbox" type="text" value="1/8&quot; = 1'-0&quot;" aria-label="View Scale"></td><td></td></tr>
    <tr class="dis"><td></td><td>96</td><td></td></tr>
    <tr><td></td><td>Medium</td><td></td></tr>
    <tr><td></td><td>Show Original</td><td></td></tr>
    <tr><td></td><td><button type="button">Edit...</button></td><td></td></tr>
    <tr><td></td><td><button type="button">Edit...</button></td><td></td></tr>
    <tr><td></td><td>Coordination</td><td></td></tr>
    <tr><td></td><td>By Discipline</td><td></td></tr>
    <tr><td></td><td>None</td><td></td></tr>
    <tr><td></td><td>all</td><td></td></tr>
    <tr><td></td><td><input type="checkbox" aria-label="Sun Path"></td><td></td></tr>
    <tr class="grp"><th colspan="3"><i class="dbl"></i></th></tr>
    <tr><td></td><td></td><td><button type="button" aria-label="Browse"></button></td></tr>
    <tr class="grp"><th colspan="3"><i class="dbl"></i></th></tr>
    <tr><td></td><td><input type="checkbox" aria-label="Crop View"></td><td></td></tr>
    <tr><td></td><td><input type="checkbox" aria-label="Crop Region Visible"></td><td></td></tr>
    <tr><td></td><td><input type="checkbox" aria-label="Annotation Crop"></td><td></td></tr>
    <tr><td></td><td><input type="checkbox" aria-label="Far Clip Active"></td><td></td></tr>
    <tr class="dis"><td></td><td>1000'&nbsp; 0"</td><td></td></tr>
    <tr><td></td><td>None</td><td></td></tr>
    <tr><td></td><td><input type="checkbox" aria-label="Section Box"></td><td></td></tr>
    <tr class="grp"><th colspan="3"><i class="dbl"></i></th></tr>
    <tr><td>Rendering Settings</td><td><button type="button">Edit...</button></td><td></td></tr>
    <tr class="dis"><td><label for="lock">Locked Orientation</label></td><td><input type="checkbox" id="lock" disabled></td><td></td></tr>
    <tr><td>Projection Mode</td><td>Orthographic</td><td></td></tr>
    <tr><td>Eye Elevation</td><td>1395'&nbsp; 8 117/128"</td><td></td></tr>
    <tr><td>Target Elevation</td><td>29'&nbsp; 1 97/128"</td><td></td></tr>
    <tr class="dis"><td>Camera Position</td><td>Adjusting</td><td></td></tr>
    <tr class="grp"><th colspan="3">Identity Data<i class="dbl"></i></th></tr>
    <tr><td>View Template</td><td><button type="button">&lt;None&gt;</button></td><td></td></tr>
    <tr><td>View Name</td><td>EBD_Color_IFC</td><td></td></tr>
    <tr class="dis"><td>Dependency</td><td>Independent</td><td></td></tr>
    <tr><td>Title on Sheet</td><td></td><td></td></tr>
    <tr class="dis"><td>Workset</td><td>View "3D View: EBD_Color_IFC"</td><td></td></tr>
    <tr class="dis"><td>Edited by</td><td>emily.bisaga.dunne</td><td></td></tr>
    <tr class="grp"><th colspan="3">Phasing<i class="dbl"></i></th></tr>
    <tr><td>Phase Filter</td><td>Show Complete</td><td></td></tr>
    <tr><td>Phase</td><td>TI</td><td></td></tr>
    <tr class="grp"><th colspan="3">Other<i class="dbl"></i></th></tr>
    <tr><td>View Classification</td><td></td><td></td></tr>
  </table>
  <div class="vscroll"><i class="chev up"></i><div class="thumb props-thumb"></div></div>
  </div>
  <div class="help"><a href="#">Properties help</a></div>
</aside>

</main>

<footer class="status">
  <span class="ready">Ready</span>
  <svg class="ic"><use href="#s-people"/></svg>
  <span class="combo"><select aria-label="Active workset" disabled><option>Revit Topo (Not Editable)</option></select></span>
  <svg class="ic"><use href="#s-filter"/></svg>
  <span class="count">:0</span>
  <svg class="ic blk"><use href="#s-blk"/></svg>
  <svg class="ic"><use href="#i-switch"/></svg>
  <span class="combo"><select aria-label="Design option" disabled><option>Main Model</option></select></span>
  <div class="tail">
    <svg class="ic"><use href="#s-fun"/></svg>
    <svg class="ic"><use href="#s-wedge"/></svg>
    <svg class="ic"><use href="#s-pin"/></svg>
  </div>
</footer>

<div class="dialog" role="dialog" aria-labelledby="dlgtitle">
  <div class="dtitle"><svg class="ic"><use href="#i-r"/></svg><span id="dlgtitle">Link IFC</span>
    <button type="button" class="q">?</button><button type="button" aria-label="Close"><svg><use href="#i-x"/></svg></button></div>
  <div class="lookin">
    <label for="look">Look in:</label>
    <span class="combo grey"><svg class="ic"><use href="#d-folder"/></svg><select id="look"><option>Project Files</option></select></span>
    <svg class="ic"><use href="#d-back"/></svg>
    <svg class="ic"><use href="#d-up"/></svg>
    <svg class="ic"><use href="#d-del"/></svg>
    <svg class="ic"><use href="#d-new"/></svg>
    <button type="button" class="views"><span><u>V</u>iews</span><i class="arr big"></i></button>
  </div>
  <div class="dbody">
    <div class="places">
      <div class="plist">
        <button type="button"><svg><use href="#p-fav"/></svg>Favorites</button>
        <button type="button"><svg><use href="#p-comp"/></svg>My Computer</button>
        <button type="button"><svg><use href="#p-net"/></svg>My Network...</button>
        <button type="button"><svg><use href="#p-desk"/></svg>Desktop</button>
        <button type="button"><svg><use href="#p-fold"/></svg>Imperial Lib...</button>
        <button type="button"><svg><use href="#p-fold"/></svg>Imperial Det...</button>
      </div>
      <div class="vscroll"><i class="chev up"></i><div class="gap"></div><div class="thumb places-thumb"></div><i class="chev down"></i></div>
    </div>
    <div class="files">
      <div class="flist">
      <table class="ftable">
        <colgroup><col class="f1"><col class="f2"><col class="f3"></colgroup>
        <thead><tr><th class="sorted">Name</th><th>DateModified</th><th>ItemTypeText</th></tr></thead>
        <tbody>
          <tr class="sel"><td><label><input type="checkbox" checked><svg class="ic"><use href="#d-ifc"/></svg>Pump-House.ifc</label></td><td>8/10/2018 10:16 AM</td><td>IAI Industry Foundation Classes</td></tr>
          <tr class="rest"><td></td><td></td><td></td></tr>
        </tbody>
      </table>
      </div>
      <div class="hscroll"><i class="chev left"></i><div class="thumb"></div><i class="chev rightward"></i></div>
      <div class="field"><label for="fname">File name:</label><span class="combo"><input id="fname" type="text" value="Pump-House.ifc"></span></div>
      <div class="field"><label for="ftype">Files of type:</label><span class="combo grey"><select id="ftype"><option>IFC Files&nbsp; (*.ifc)</option></select></span></div>
    </div>
  </div>
  <div class="dfoot">
    <button type="button" class="btn tools"><span>Too<u>l</u>s</span><i class="arr big"></i></button>
    <button type="button" class="btn"><span><u>O</u>pen</span></button>
    <button type="button" class="btn">Cancel</button>
  </div>
</div>

<div class="brand">bnım</div>

</body>
</html>
```
FILE: styles.css
```
* { box-sizing: border-box; }
body {
  margin: 0;
  height: 100vh;
  display: flex;
  flex-direction: column;
  overflow: hidden;
  position: relative;
  background: #eee;
  color: #1c1c1c;
  font: 11px/18px "Noto Sans", "Open Sans", sans-serif;
}
button, input, select { font: inherit; color: inherit; margin: 0; padding: 0; border: 0; background: none; border-radius: 0; }
select { appearance: none; opacity: 1; }
h1, h2 { margin: 0; font-size: 11px; font-weight: 400; }
ul { list-style: none; margin: 0; padding: 0; }
svg { display: block; fill: none; }
.sprite { display: none; }

.ic { width: 16px; height: 16px; flex: none; stroke: #777; }
.ic.small { width: 10px; height: 10px; }
.ic.dark { stroke: #333; }
.arr { flex: none; width: 4px; height: 3px; background: #444; clip-path: polygon(0 0, 100% 0, 50% 100%); }
.arr.big { width: 8px; height: 4px; background: #111; }
.arr.right { width: 4px; height: 8px; clip-path: polygon(0 0, 100% 50%, 0 100%); }
.sep { flex: none; width: 1px; height: 26px; margin: 0 -1px; background: #b8b8b8; }

/* title bar */
.titlebar { display: flex; height: 29px; background: #cbcbcb; }
.qat { display: flex; align-items: center; gap: 8px; padding: 0 0 5px 4px; }
.home { margin-right: 5px; }
.apptitle { flex: 1; text-align: center; line-height: 20px; color: #333; }
.infocenter { display: flex; align-items: center; gap: 8px; padding-bottom: 4px; }
.search { width: 180px; height: 22px; margin-right: -2px; padding: 0 4px; border: 1px solid #000; background: #fff; font-style: italic; }
.search::placeholder { color: #555; }
.username { margin-right: -6px; margin-left: -2px; color: #444; }
.cart { margin-left: 4px; }
.winbtns { display: flex; align-items: center; gap: 13px; padding: 0 6px 4px 20px; }
.winbtns svg, .dtab button svg, .dtitle button svg { width: 12px; height: 12px; }

/* ribbon */
.tabs { display: flex; gap: 1px; height: 20px; background: #cbcbcb; }
.tabs button { padding: 0 10px; line-height: 20px; }
.tabs .file { width: 45px; margin-right: 1px; background: #2a77b5; color: #fff; }
.tabs .on { background: #eee; }
.tabs .collapse { display: flex; align-items: center; gap: 4px; margin-left: 20px; }
.pill { width: 15px; height: 9px; border: 1px solid #555; border-radius: 3px; background: linear-gradient(#555, #555) center/4px 2px no-repeat #eee; }
.ribbon { display: flex; height: 96px; border-bottom: 1px solid #c6c6c6; }
.rpanel { display: flex; flex-direction: column; border-right: 1px solid #dadada; }
.rpanel.load { border: 0; }
.rbtns { display: grid; flex: 1; padding: 4px 0 0 2px; }
.select .rbtns { grid-template-columns: 54px; }
.link .rbtns { grid-template-columns: 38px 38px 38px 70px 56px 42px 47px 70px 52px; }
.import .rbtns { grid-template-columns: 42px 44px 68px 36px 53px; }
.load .rbtns { grid-template-columns: 43px 43px; padding-left: 8px; }
.rbtns button { display: block; position: relative; line-height: 15px; color: #a0a0a0; white-space: nowrap; text-align: center; align-self: start; }
.rbtns svg { width: 32px; height: 32px; margin: 0 auto 5px; stroke: #b2b2b2; }
.rbtns .arr { display: block; margin: 5px auto 0; background: #777; }
.rbtns .drop .arr { position: absolute; right: 3px; bottom: 12px; }
.ico-t, .ico-w { font-size: 10px; font-weight: 600; fill: #aaa; stroke: none; }
.ico-w { fill: #fff; font-weight: 700; font-size: 9px; }
.cap { position: relative; height: 20px; line-height: 18px; text-align: center; }
.select .cap { padding-right: 10px; }
.import .cap { padding-right: 12px; }
.load .cap { padding-left: 4px; }
.cap .arr { display: inline-block; vertical-align: middle; margin-left: 2px; }
.launch { position: absolute; right: 6px; top: 7px; width: 5px; height: 5px; border: solid #666; border-width: 0 1px 1px 0; }
.optionsbar { height: 28px; border-bottom: 2px solid #c8c8c8; }

/* shared scroll bits */
.scrollbox { display: flex; flex: 1; min-height: 0; }
.vscroll { flex: none; width: 16px; display: flex; flex-direction: column; align-items: center; background: #f0f0f0; }
.vscroll .gap { flex: 1; }
.chev { flex: none; width: 16px; height: 17px; display: grid; place-items: center; }
.chev::before { content: ""; width: 6px; height: 6px; border: solid #555; border-width: 2px 0 0 2px; transform: rotate(45deg) skew(6deg, 6deg); }
.down::before { transform: rotate(225deg); }
.left::before { transform: rotate(-45deg); }
.rightward::before { transform: rotate(135deg); }
.thumb { background: #cdcdcd; }
.vscroll .thumb { width: 100%; }

.work { flex: 1; min-height: 0; display: grid; grid-template-columns: 351px minmax(0, 1fr) 368px; }
h2 { height: 20px; line-height: 22px; padding-left: 3px; color: #333; }

/* project browser */
.browser { display: flex; flex-direction: column; min-height: 0; border-right: 2px solid #c8c8c8; border-bottom: 2px solid #eee; padding-right: 1px; }
.tree { flex: 1; background: #fff; overflow: hidden; }
.browser-thumb { height: 748px; margin-bottom: auto; }
.tree li { position: relative; }
.tree li::before { content: ""; position: absolute; left: 9px; top: 0; bottom: 0; border-left: 1px dotted #999; }
.tree li:last-child::before { bottom: auto; height: 10px; }
.tree ul { padding-left: 20px; }
.row { position: relative; display: flex; align-items: center; height: 18px; padding-left: 5px; white-space: nowrap; }
.row::before { content: ""; position: absolute; left: 10px; top: 10px; width: 14px; border-top: 1px dotted #999; }
.row span { margin-right: auto; line-height: 16px; }
.row > span:only-child { margin-left: 19px; padding: 0 3px; }
.row .tg + span { margin-left: 13px; }
.root::before { width: 10px; }
.root .ic { margin-left: 7px; }
.row .ic + span { margin-left: 6px; }
.row .current { background: #dcdcdc; font-weight: 700; }
.tg { position: relative; width: 9px; height: 9px; margin-top: 2px; border: 1px solid #8e9bb0; background: linear-gradient(#334f7d, #334f7d) center/5px 1px no-repeat, linear-gradient(#334f7d, #334f7d) center/1px 5px no-repeat, #fff; }
.tg.minus { background: linear-gradient(#334f7d, #334f7d) center/5px 1px no-repeat #fff; }

/* drawing area */
.viewarea { display: flex; flex-direction: column; min-width: 0; background: #fff; }
.doctabs { display: flex; height: 20px; background: #cbcbcb; color: #a0a0a0; }
.dtab { display: flex; align-items: center; gap: 8px; padding: 0 5px; white-space: nowrap; }
.t1 { width: 158px; }
.t2 { width: 129px; }
.dtab.active { background: #fff; width: 132px; color: #aaa; }
.dtab button { margin-left: auto; }
.tablist { margin: 6px 7px 0 auto; }
.canvas { flex: 1; min-height: 0; display: flex; }
.canvas .vscroll { margin-right: 4px; }
.model { flex: 1; min-width: 0; overflow: hidden; }
.hair path, .hair circle { vector-effect: non-scaling-stroke; }
.hair { stroke: #000; }
.pipe path { fill: none; stroke: #111; stroke-width: 3px; }
.pipe.in path { stroke: #8c8c8c; stroke-width: 1px; }
.hair .white { stroke: #fff; stroke-width: 1px; fill: none; }
.rail { fill: none; stroke: #000; stroke-width: 2px; }
.rail.mid { stroke-width: 2px; }
.viewbar { display: flex; align-items: center; height: 18px; gap: 5px; padding-right: 23px; background: #f0f0f0; margin: 0 0 2px; line-height: 16px; }
.scale { width: 76px; padding-left: 13px; }
.viewbar .hthumb { width: 17px; height: 15px; margin-left: 363px; margin-right: auto; background: #cdcdcd; }

/* properties */
.props { display: flex; flex-direction: column; min-height: 0; border-left: 2px solid #dadada; }
.typesel { display: flex; height: 72px; border: solid #ccc; border-width: 1px 1px 1px 0; padding: 3px 2px; }
.preview { width: 66px; height: 66px; border: 1px solid #c8c8c8; padding: 13px; }
.preview svg { width: 38px; height: 38px; }
.typesel span { margin-left: 5px; line-height: 50px; color: #444; }
.typesel .arr { margin: 31px -2px 0 auto; }
.instance { display: flex; align-items: center; height: 25px; gap: 6px; }
.instance .combo { width: 283px; height: 22px; }
.instance button { display: flex; align-items: center; gap: 5px; line-height: 16px; }
.ptable { flex: none; align-self: flex-start; width: 348px; table-layout: fixed; border-collapse: separate; border-spacing: 0; background: #fff; }
.c1 { width: 168px; }
.c2 { width: 168px; }
.c3 { width: 12px; }
.ptable td, .ptable th { height: 18px; padding: 0; line-height: 16px; font-weight: 400; text-align: left; white-space: nowrap; vertical-align: top; }
.ptable td { border: dotted #777; border-width: 0 1px 1px 0; }
.ptable td:first-child { padding-left: 8px; }
.ptable td:nth-child(2) { padding-left: 2px; }
.ptable th { background: #dbdbdb; padding-left: 2px; line-height: 18px; }
.ptable .dis { color: #7c7c7c; }
.ptable button { display: block; width: 165px; height: 16px; margin-top: 1px; line-height: 13px; background: #e1e1e1; border: 1px solid #aaa; border-width: 1px 2px 2px 1px; }
.ptable td:last-child button { width: 10px; }
input[type=checkbox] { appearance: none; display: block; position: relative; width: 13px; height: 13px; border: 1px solid #333; background: #fff; }
input[type=checkbox]:checked::after { content: ""; position: absolute; left: 3px; top: 0; width: 4px; height: 7px; border: solid #333; border-width: 0 1px 1px 0; transform: rotate(45deg); }
.ptable input[type=checkbox] { margin: 3px 0 0 1px; }
.ptable input[type=checkbox]:disabled { border-color: #ccc; }
.ptable .cellbox { display: block; width: 167px; height: 17px; margin-left: -2px; padding: 0 4px; border: 1px solid #000; background: #fff; }
.dbl { float: right; width: 8px; height: 16px; margin-right: 5px; position: relative; }
.dbl::before, .dbl::after { content: ""; position: absolute; left: 1px; top: 6px; width: 4px; height: 4px; border: solid #222; border-width: 1px 0 0 1px; transform: rotate(45deg); }
.dbl::after { top: 10px; }
.props .vscroll { margin-left: 1px; align-self: stretch; }
.props-thumb { height: 675px; }
.help { height: 28px; padding: 3px 1px; border-bottom: 1px solid #c8c8c8; }
.help a { color: #2a6fb0; }

/* status bar */
.status { display: flex; align-items: center; height: 24px; padding-top: 1px; background: #cbcbcb; border-bottom: 2px solid #222; color: #222; }
.ready { width: 879px; padding-left: 1px; }
.status .combo { width: 204px; height: 17px; margin: 0 8px; background: #fff; border: 0; color: #888; }
.count { margin: 0 22px 0 6px; }
.blk { margin-right: 10px; }
.tail { display: flex; gap: 10px; margin: 0 201px 0 auto; }

.combo { position: relative; display: flex; align-items: center; background: #fff; border: 1px solid #7a7a7a; }
.combo.grey { background: #e1e1e1; border-color: #adadad; }
.combo select, .combo input { flex: 1; min-width: 0; height: 100%; padding: 0 3px; outline: 0; }
.combo .ic + select { padding: 0; }
.combo::after { content: ""; position: absolute; right: 5px; top: 50%; width: 6px; height: 6px; margin-top: -5px; border: solid #777; border-width: 0 1px 1px 0; transform: rotate(45deg); pointer-events: none; }

/* Link IFC window */
.dialog { position: absolute; left: 942px; top: 226px; width: 775px; height: 490px; display: flex; flex-direction: column; background: #f0f0f0; border: 1px solid #555; box-shadow: 3px 6px 16px rgba(0, 0, 0, .4); color: #111; }
.dtitle { display: flex; align-items: center; height: 30px; padding: 0 17px 0 8px; background: #fff; }
.dtitle span { margin: 0 auto 0 5px; }
.dtitle .q { font-size: 14px; margin-right: 35px; }
.lookin { display: flex; align-items: center; height: 22px; margin-top: 11px; gap: 10px; padding-right: 11px; }
.lookin label { width: 116px; text-align: right; }
.lookin .combo { width: 471px; height: 22px; padding-left: 5px; margin-right: -2px; }
.views { display: flex; align-items: center; gap: 12px; margin-left: 4px; }
.dbody { display: flex; gap: 8px; padding: 3px 11px 0 11px; }
.places { display: flex; width: 107px; height: 378px; padding: 1px; border: 1px solid #888; background: #fff; }
.plist { flex: 1; background: #a0a0a0; }
.plist button { display: block; width: 83px; height: 60px; padding-top: 5px; color: #fff; text-align: center; white-space: nowrap; }
.plist svg { width: 30px; height: 30px; margin: 0 auto 6px; }
.places-thumb { height: 226px; }
.files { flex: 1; min-width: 0; }
.flist { height: 309px; background: #fff; overflow: hidden; }
.ftable { width: 636px; height: 307px; table-layout: fixed; border-collapse: separate; border-spacing: 0; }
.f1 { width: 271px; }
.f2 { width: 192px; }
.f3 { width: 173px; }
.ftable th, .ftable td { padding: 0 0 0 7px; text-align: left; font-weight: 400; white-space: nowrap; border-right: 1px solid #eee; }
.ftable td:last-child, .ftable th:last-child { padding-left: 6px; border: 0; }
.ftable th { height: 24px; position: relative; }
.ftable th:first-child { padding-left: 10px; }
.sorted::after { content: ""; position: absolute; left: 50%; top: 3px; width: 5px; height: 5px; border: solid #777; border-width: 1px 0 0 1px; transform: rotate(45deg); }
.sel td { height: 19px; background: #cce8ff; color: #10123a; border-color: #c0dcf3; }
.sel td:first-child { border-left: 4px solid #fff; padding-left: 4px; }
.sel label { display: flex; align-items: center; gap: 3px; }
.hscroll { display: flex; height: 15px; }
.hscroll .chev, .viewbar .chev { height: 15px; }
.hscroll .thumb { flex: 1; margin-right: 18px; }
.field { display: flex; margin-top: 7px; height: 21px; }
.field + .field { margin-top: 4px; }
.field label { width: 71px; margin-right: 6px; text-align: right; line-height: 20px; white-space: nowrap; }
.field .combo { width: 453px; }
.dfoot { display: flex; gap: 14px; padding: 14px 11px 0 12px; }
.btn { width: 96px; height: 22px; background: #e1e1e1; border: 1px solid #adadad; }
.tools { display: flex; align-items: center; justify-content: flex-end; gap: 28px; width: 88px; margin-right: auto; padding-right: 3px; }

.brand { position: absolute; right: 0; bottom: 0; width: 200px; height: 68px; background: #fff; color: #ff5000; font: 900 92px/62px Lato, sans-serif; text-indent: -6px; }
```
